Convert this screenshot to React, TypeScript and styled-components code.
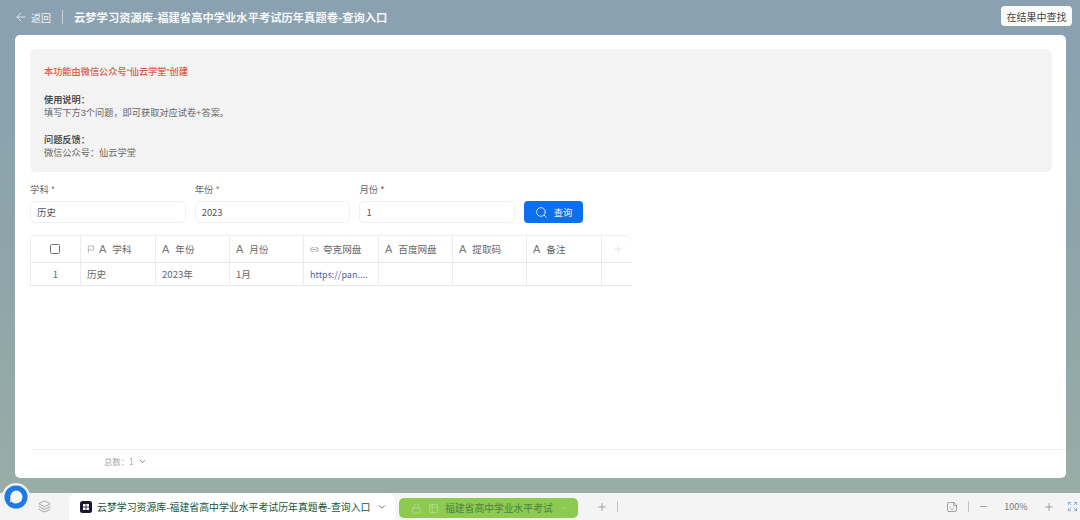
import React from 'react'
import styled, { createGlobalStyle } from 'styled-components'
import {
  ArrowLeft,
  ChevronDown,
  Expand,
  Flag,
  Layers,
  Link2,
  Lock,
  Minus,
  Plus,
  Search,
  Sticker,
  Table2,
} from 'lucide-react'

const GlobalStyle = createGlobalStyle`
  html, body {
    margin: 0;
    padding: 0;
    width: 1080px;
    height: 520px;
    overflow: hidden;
    font-family: "Noto Sans CJK SC", "Liberation Sans", sans-serif;
  }
  * { box-sizing: border-box; }
`

const Page = styled.div`
  position: relative;
  width: 1080px;
  height: 520px;
  display: flex;
  flex-direction: column;
  background: linear-gradient(180deg, #89a1b1 0%, #8ea5aa 50%, #9aaea6 100%);
`

const Header = styled.header`
  height: 35px;
  flex: none;
  display: flex;
  align-items: center;
  padding: 0 8px 1px 14px;
  color: #fff;
`

const BackLink = styled.a`
  display: flex;
  align-items: center;
  gap: 3px;
  font-size: 10px;
  color: #eef3f5;
`

const HeaderDivider = styled.span`
  width: 1px;
  height: 14px;
  margin: 0 11px;
  background: #c5d2d8;
`

const Title = styled.h1`
  flex: 1;
  margin: 0;
  font-size: 11.3px;
  font-weight: 700;
  color: #f6f8f9;
`

const FindButton = styled.button`
  width: 71px;
  height: 20px;
  margin-top: -2px;
  padding: 0;
  border: none;
  border-radius: 4px;
  background: #fbfbfb;
  color: #444;
  font: inherit;
  font-size: 10px;
`

const Card = styled.main`
  height: 443px;
  margin: 0 14px 0 15px;
  padding: 14px 14px 0 15px;
  display: flex;
  flex-direction: column;
  background: #fff;
  border-radius: 5px;
`

const Notice = styled.section`
  height: 123px;
  padding: 17px 14px 0;
  background: #f3f3f3;
  border-radius: 6px;
  font-family: "Liberation Sans", "Noto Sans CJK SC", sans-serif;
  font-size: 9.2px;
  line-height: 13px;
  color: #666;
`

const NoticeBlock = styled.p`
  margin: 0 0 14px;
`

const NoticeLead = styled.p`
  margin: 0 0 15px;
  color: #e2583a;
  font-weight: 500;
`

const Strong = styled.strong`
  display: block;
  font-weight: 500;
  color: #333;
`

const QueryForm = styled.form`
  display: flex;
  align-items: flex-end;
  gap: 9px;
  margin-top: 11px;
`

const Field = styled.label`
  width: 155.7px;
  display: flex;
  flex-direction: column;
  gap: 5px;
  font-size: 9.4px;
  line-height: 13px;
  color: #666;
`

const Required = styled.span<{ $strong?: boolean }>`
  color: ${(p) => (p.$strong ? '#c0392b' : '#888')};
`

const Value = styled.div`
  height: 22px;
  padding: 0 6px;
  display: flex;
  align-items: center;
  border: 1px solid #f0f0f0;
  border-radius: 5px;
  font-size: 9.4px;
  color: #555;
`

const QueryButton = styled.button`
  width: 59px;
  height: 22px;
  padding: 0;
  display: flex;
  align-items: center;
  justify-content: center;
  gap: 6px;
  border: none;
  border-radius: 4px;
  background: #0c6fee;
  color: #e8f1fd;
  font: inherit;
  font-size: 9.4px;
`

const DataTable = styled.div`
  width: 602px;
  margin-top: 12px;
  border: 1px solid #eeeeee;
  border-right: none;
  border-bottom: 1px solid #e6e6e6;
  border-radius: 4px 8px 0 0;
  color: #666;
  font-size: 9.6px;
`

const TableRow = styled.div<{ $header?: boolean }>`
  display: grid;
  grid-template-columns: 50px 75px 74px 74px 75px 74px 74px 75px 31px;
  height: ${(p) => (p.$header ? '27px' : '22px')};
  border-bottom: ${(p) => (p.$header ? '1px solid #e8e8e8' : 'none')};
`

const Cell = styled.div<{ $center?: boolean; $link?: boolean }>`
  min-width: 0;
  padding: 0 6px;
  display: flex;
  align-items: center;
  justify-content: ${(p) => (p.$center ? 'center' : 'flex-start')};
  gap: 4px;
  border-right: 1px solid #ececec;
  color: ${(p) => (p.$link ? '#4a5fa8' : 'inherit')};
  font-size: ${(p) => (p.$link ? '9px' : 'inherit')};
  white-space: nowrap;
  overflow: hidden;

  &:last-child {
    border-right: none;
  }
`

const TypeGlyph = styled.span`
  font-family: "Liberation Sans", sans-serif;
  font-size: 11px;
  color: #777;
  margin-right: 2px;
`

const Checkbox = styled.span`
  width: 10px;
  height: 10px;
  margin-right: 2px;
  border: 1px solid #777;
  border-radius: 1.5px;
`

const CardFooter = styled.footer`
  margin-top: auto;
  margin-right: -14px;
  margin-left: 2px;
  height: 29px;
  padding: 5px 0 0 72px;
  display: flex;
  align-items: flex-start;
  gap: 4px;
  border-top: 1px solid #efefef;
  font-size: 8.4px;
  line-height: 12px;
  color: #a4a4a4;

  svg {
    margin-top: 2px;
  }
`

const TaskBar = styled.nav`
  height: 27px;
  margin-top: 15px;
  padding-left: 38px;
  flex: none;
  display: flex;
  align-items: flex-end;
  background: #f3f4f3;
  color: #777;
`

const LayersSlot = styled.span`
  width: 31px;
  height: 27px;
  display: flex;
  align-items: center;
`

const ActiveTab = styled.div`
  width: 326px;
  height: 27px;
  padding: 1px 8px 0 11px;
  display: flex;
  align-items: center;
  gap: 5px;
  background: #fff;
  border-radius: 7px 7px 0 0;
  color: #20552f;
  font-size: 9.9px;
  white-space: nowrap;
`

const TabLogo = styled.svg`
  flex: none;
`

const TabName = styled.span`
  flex: 1;
  min-width: 0;
`

const GreenTab = styled.div`
  width: 179px;
  height: 20px;
  margin: 0 0 2px 4px;
  padding: 0 9px 0 12px;
  display: flex;
  align-items: center;
  gap: 6px;
  background: #8ccb4f;
  border-radius: 5px;
  color: #4d7d45;
  font-size: 9.8px;
  white-space: nowrap;

  svg {
    flex: none;
  }
`

const TabTools = styled.div`
  height: 27px;
  margin-left: 18px;
  display: flex;
  align-items: center;
  gap: 9px;
`

const ThinBar = styled.span`
  width: 1px;
  height: 11px;
  background: #c4c4c4;
`

const ZoomTools = styled.div`
  height: 27px;
  margin-left: auto;
  padding-right: 2px;
  display: flex;
  align-items: center;

  svg {
    flex: none;
  }
`

const ZoomDivider = styled(ThinBar)`
  margin: 0 9px 0 10px;
`

const ZoomValue = styled.span`
  width: 54px;
  text-align: center;
  font-size: 9px;
  color: #777;
`

const FitButton = styled.span`
  display: flex;
  margin-left: 12px;
  color: #5f93d4;
`

const AssistantBadge = styled.div`
  position: absolute;
  left: 2px;
  top: 483px;
  width: 28px;
  height: 28px;
  display: flex;
  align-items: center;
  justify-content: center;
  border-radius: 50%;
  background: #eef1f3;
`

const columns = ['年份', '月份']
const moreColumns = ['百度网盘', '提取码', '备注']

function App() {
  return (
    <Page>
      <GlobalStyle />
      <Header>
        <BackLink>
          <ArrowLeft size={14} strokeWidth={1.4} />
          返回
        </BackLink>
        <HeaderDivider />
        <Title>云梦学习资源库-福建省高中学业水平考试历年真题卷-查询入口</Title>
        <FindButton>在结果中查找</FindButton>
      </Header>

      <Card>
        <Notice>
          <NoticeLead>本功能由微信公众号“仙云学堂”创建</NoticeLead>
          <NoticeBlock>
            <Strong>使用说明：</Strong>
            填写下方3个问题，即可获取对应试卷+答案。
          </NoticeBlock>
          <NoticeBlock>
            <Strong>问题反馈：</Strong>
            微信公众号：仙云学堂
          </NoticeBlock>
        </Notice>

        <QueryForm>
          <Field>
            <span>学科 <Required>*</Required></span>
            <Value>历史</Value>
          </Field>
          <Field>
            <span>年份 <Required>*</Required></span>
            <Value>2023</Value>
          </Field>
          <Field>
            <span>月份 <Required $strong>*</Required></span>
            <Value>1</Value>
          </Field>
          <QueryButton type="button">
            <Search size={13} strokeWidth={1.6} />
            查询
          </QueryButton>
        </QueryForm>

        <DataTable>
          <TableRow $header>
            <Cell $center><Checkbox /></Cell>
            <Cell>
              <Flag size={8} strokeWidth={1.4} />
              <TypeGlyph>A</TypeGlyph>学科
            </Cell>
            {columns.map((name) => (
              <Cell key={name}><TypeGlyph>A</TypeGlyph>{name}</Cell>
            ))}
            <Cell>
              <Link2 size={9} strokeWidth={1.5} />
              夸克网盘
            </Cell>
            {moreColumns.map((name) => (
              <Cell key={name}><TypeGlyph>A</TypeGlyph>{name}</Cell>
            ))}
            <Cell $center><Plus size={12} strokeWidth={1.2} color="#d4d4d4" /></Cell>
          </TableRow>
          <TableRow>
            <Cell $center>1</Cell>
            <Cell>历史</Cell>
            <Cell>2023年</Cell>
            <Cell>1月</Cell>
            <Cell $link>https://pan....</Cell>
            <Cell />
            <Cell />
            <Cell />
            <Cell />
          </TableRow>
        </DataTable>

        <CardFooter>
          总数：1
          <ChevronDown size={9} strokeWidth={2} color="#666" />
        </CardFooter>
      </Card>

      <TaskBar>
        <LayersSlot><Layers size={13} strokeWidth={1.2} /></LayersSlot>
        <ActiveTab>
          <TabLogo width="12" height="12" viewBox="0 0 12 12">
            <rect width="12" height="12" rx="2.5" fill="#1b1433" />
            <rect x="3" y="3" width="2.6" height="2.6" fill="#fff" />
            <rect x="6.4" y="3" width="2.6" height="2.6" fill="#fff" />
            <rect x="3" y="6.4" width="2.6" height="2.6" fill="#fff" />
            <rect x="6.4" y="6.4" width="2.6" height="2.6" fill="#fff" />
          </TabLogo>
          <TabName>云梦学习资源库-福建省高中学业水平考试历年真题卷-查询入口</TabName>
          <ChevronDown size={10} strokeWidth={2} color="#555" />
        </ActiveTab>
        <GreenTab>
          <Lock size={11} strokeWidth={1.4} color="#c3dfa5" />
          <Table2 size={11} strokeWidth={1.4} color="#c3dfa5" />
          <TabName>福建省高中学业水平考试</TabName>
          <ChevronDown size={9} strokeWidth={2} color="#b6d88f" />
        </GreenTab>
        <TabTools>
          <Plus size={12} strokeWidth={1.3} />
          <ThinBar />
        </TabTools>
        <ZoomTools>
          <Sticker size={12} strokeWidth={1.3} />
          <ZoomDivider />
          <Minus size={11} strokeWidth={1.3} />
          <ZoomValue>100%</ZoomValue>
          <Plus size={12} strokeWidth={1.3} />
          <FitButton><Expand size={11} strokeWidth={1.4} /></FitButton>
        </ZoomTools>
      </TaskBar>

      <AssistantBadge>
        <svg width="24" height="24" viewBox="0 0 24 24">
          <circle cx="12" cy="12" r="11.5" fill="#1f78e6" />
          <path d="M12 5.5 a6.5 6.5 0 1 1 -4.6 11.1 l-1.4 1 .4-4.2 A6.5 6.5 0 0 1 12 5.5z" fill="#f4f8fd" />
        </svg>
      </AssistantBadge>
    </Page>
  )
}

export default App
